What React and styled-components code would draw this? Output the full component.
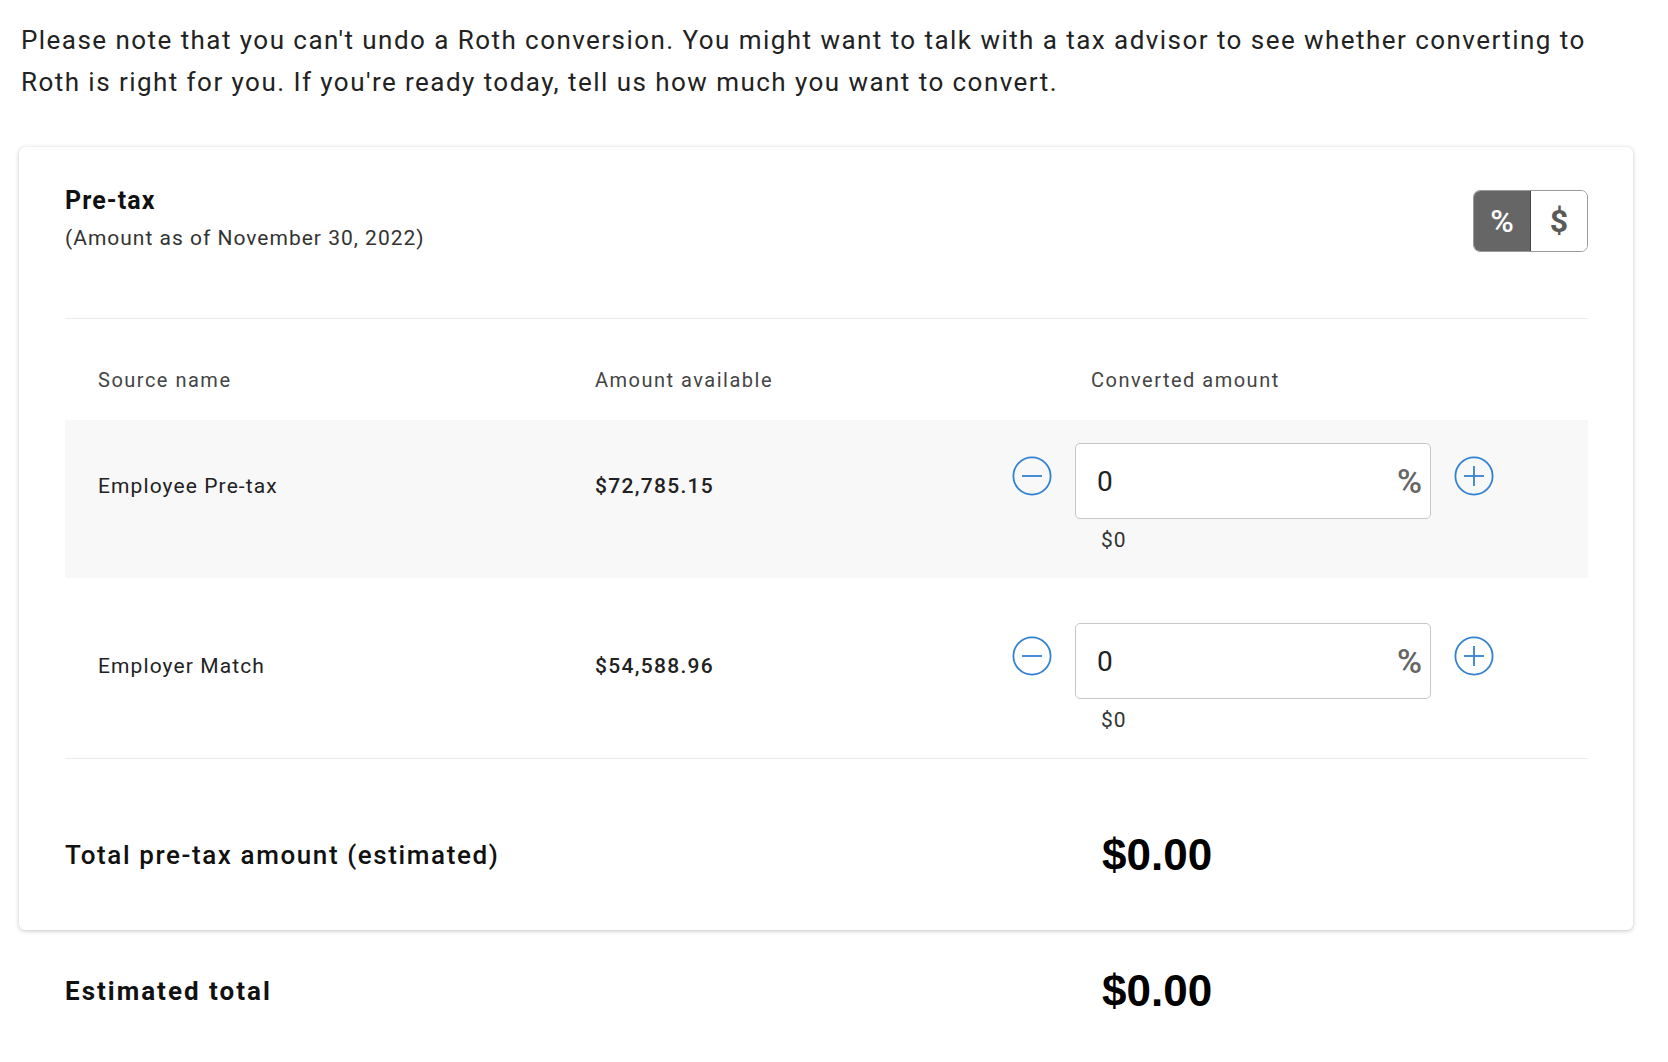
import React from 'react';
import styled, { createGlobalStyle } from 'styled-components';

const GlobalStyle = createGlobalStyle`
  body {
    margin: 0;
    background: #fff;
    font-family: Roboto, "Liberation Sans", Arial, sans-serif;
    color: #222;
  }
`;

const SOURCES = [
  { name: 'Employee Pre-tax', available: '$72,785.15', shaded: true },
  { name: 'Employer Match', available: '$54,588.96', shaded: false },
];

function CircleIcon({ plus }) {
  return (
    <IconButton aria-label={plus ? 'Increase' : 'Decrease'}>
      <svg width="40" height="40" viewBox="0 0 40 40">
        <circle cx="20" cy="20" r="18.6" fill="none" stroke="#3382d2" strokeWidth="1.8" />
        <line x1="10" y1="20" x2="30" y2="20" stroke="#3382d2" strokeWidth="1.8" />
        {plus && <line x1="20" y1="10" x2="20" y2="30" stroke="#3382d2" strokeWidth="1.8" />}
      </svg>
    </IconButton>
  );
}

export default function App() {
  return (
    <Page>
      <GlobalStyle />
      <Intro>
        Please note that you can't undo a Roth conversion. You might want to talk with a tax advisor to see whether
        converting to Roth is right for you. If you're ready today, tell us how much you want to convert.
      </Intro>

      <Card>
        <CardHeader>
          <div>
            <Title>Pre-tax</Title>
            <Subtitle>(Amount as of November 30, 2022)</Subtitle>
          </div>
          <Toggle>
            <ToggleOption active>%</ToggleOption>
            <ToggleOption>$</ToggleOption>
          </Toggle>
        </CardHeader>

        <Divider />

        <HeaderRow>
          <ColumnLabel>Source name</ColumnLabel>
          <ColumnLabel>Amount available</ColumnLabel>
          <ColumnLabel indent>Converted amount</ColumnLabel>
        </HeaderRow>

        {SOURCES.map((s) => (
          <SourceRow key={s.name} shaded={s.shaded}>
            <Cell>{s.name}</Cell>
            <Cell strong>{s.available}</Cell>
            <Controls>
              <CircleIcon />
              <AmountBlock>
                <AmountInput>
                  <InputValue>0</InputValue>
                  <InputUnit>%</InputUnit>
                </AmountInput>
                <DollarHint>$0</DollarHint>
              </AmountBlock>
              <CircleIcon plus />
            </Controls>
          </SourceRow>
        ))}

        <Divider />

        <TotalRow>
          <TotalLabel>Total pre-tax amount (estimated)</TotalLabel>
          <TotalValue>$0.00</TotalValue>
        </TotalRow>
      </Card>

      <GrandTotal>
        <TotalLabel bold>Estimated total</TotalLabel>
        <TotalValue>$0.00</TotalValue>
      </GrandTotal>
    </Page>
  );
}

const Page = styled.div`
  padding: 19px 35px 40px 19px;
`;

const Intro = styled.p`
  margin: 0 0 44px 2px;
  max-width: 1590px;
  font-size: 26px;
  line-height: 42px;
  letter-spacing: 1.45px;
  color: #222;
`;

const Card = styled.section`
  background: #fff;
  border-radius: 6px;
  box-shadow: 0 1px 4px rgba(0, 0, 0, 0.22), 0 0 1px rgba(0, 0, 0, 0.08);
  padding: 40px 45px 50px 46px;
`;

const CardHeader = styled.div`
  display: flex;
  justify-content: space-between;
  align-items: flex-start;
  padding-bottom: 66px;
`;

const Title = styled.div`
  font-size: 25px;
  font-weight: 700;
  line-height: 28px;
  letter-spacing: 1.1px;
  color: #111;
`;

const Subtitle = styled.div`
  margin-top: 10px;
  font-size: 21px;
  line-height: 26px;
  letter-spacing: 1px;
  color: #333;
`;

const Toggle = styled.div`
  display: flex;
  margin-top: 3px;
  height: 60px;
  border: 1px solid #9a9a9a;
  border-radius: 7px;
  overflow: hidden;
`;

const ToggleOption = styled.div`
  width: 56px;
  display: flex;
  align-items: center;
  justify-content: center;
  font-size: 32px;
  font-weight: ${(p) => (p.active ? 500 : 700)};
  background: ${(p) => (p.active ? '#666' : '#fff')};
  color: ${(p) => (p.active ? '#fff' : '#5a5a5a')};
  border-left: ${(p) => (p.active ? 'none' : '1px solid #444')};
`;

const Divider = styled.hr`
  margin: 0;
  border: none;
  border-top: 1px solid #ebebeb;
`;

const columns = `
  display: grid;
  grid-template-columns: 497px 417px 1fr;
  padding-left: 33px;
`;

const HeaderRow = styled.div`
  ${columns}
  padding-top: 49px;
  padding-bottom: 28px;
`;

const ColumnLabel = styled.div`
  font-size: 20px;
  line-height: 24px;
  letter-spacing: 1.5px;
  color: #444;
  padding-left: ${(p) => (p.indent ? '79px' : '0')};
`;

const SourceRow = styled.div`
  ${columns}
  height: 158px;
  box-sizing: border-box;
  padding-top: 23px;
  background: ${(p) => (p.shaded ? '#f8f8f8' : 'transparent')};

  & + & {
    margin-top: 22px;
  }
`;

const Cell = styled.div`
  padding-top: 31px;
  font-size: 21px;
  line-height: 24px;
  letter-spacing: ${(p) => (p.strong ? '1.3px' : '1.1px')};
  color: #222;
  font-weight: ${(p) => (p.strong ? 500 : 400)};
`;

const Controls = styled.div`
  display: flex;
  align-items: flex-start;
  gap: 23px;
`;

const IconButton = styled.div`
  width: 40px;
  height: 40px;
  margin-top: 13px;
  display: flex;
`;

const AmountBlock = styled.div`
  display: flex;
  flex-direction: column;
`;

const AmountInput = styled.div`
  width: 356px;
  height: 76px;
  box-sizing: border-box;
  border: 1.5px solid #c6c6c6;
  border-radius: 5px;
  background: #fff;
  display: flex;
  align-items: center;
  justify-content: space-between;
  padding: 0 8px 0 21px;
`;

const InputValue = styled.span`
  font-size: 28px;
  color: #222;
`;

const InputUnit = styled.span`
  font-size: 34px;
  font-weight: 500;
  color: #666;
`;

const DollarHint = styled.div`
  margin-top: 10px;
  padding-left: 26px;
  font-size: 21px;
  line-height: 22px;
  letter-spacing: 1px;
  color: #333;
`;

const TotalRow = styled.div`
  display: grid;
  grid-template-columns: 1037px 1fr;
  align-items: center;
  padding-top: 71px;
`;

const TotalLabel = styled.div`
  font-size: 26px;
  font-weight: ${(p) => (p.bold ? 700 : 500)};
  letter-spacing: ${(p) => (p.bold ? '2px' : '1.6px')};
  color: #111;
`;

const TotalValue = styled.div`
  font-family: "Liberation Sans", Arial, sans-serif;
  font-size: 44px;
  line-height: 50px;
  font-weight: 700;
  color: #000;
`;

const GrandTotal = styled.div`
  display: grid;
  grid-template-columns: 1037px 1fr;
  align-items: center;
  margin-top: 36px;
  padding-left: 46px;
`;
